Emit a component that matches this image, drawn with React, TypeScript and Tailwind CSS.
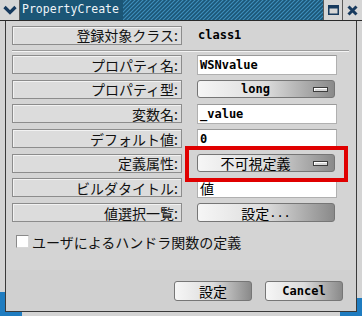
import React from "react";

const cjk = "font-['Noto_Sans_CJK_JP',sans-serif]";
const mono = "font-['DejaVu_Sans_Mono',monospace]";

function Label({ children }: { children: React.ReactNode }) {
  return (
    <div
      className={`w-[170px] h-[19px] shrink-0 border border-[#8c8c8c] bg-[#dcdcdc] shadow-[inset_1px_1px_0_#f2f2f2] flex items-center justify-end pr-[3px] text-[14px] leading-none text-[#111] ${cjk}`}
    >
      {children}
    </div>
  );
}

function Input({ children, isCjk }: { children: React.ReactNode; isCjk?: boolean }) {
  return (
    <div
      className={`ml-[15px] w-[140px] h-[20px] bg-white border border-[#b0b0b0] border-t-[#9a9a9a] flex items-center pl-[2px] leading-none text-black ${
        isCjk ? `${cjk} text-[14px]` : `${mono} font-bold text-[12px]`
      }`}
    >
      {children}
    </div>
  );
}

function Combo({ children, isCjk }: { children: React.ReactNode; isCjk?: boolean }) {
  return (
    <div className="ml-[15px] w-[138px] h-[18px] rounded-[3px] border border-[#767676] bg-gradient-to-r from-[#f6f6f6] via-[#dcdcdc] to-[#8a8a8a] flex items-center">
      <div
        className={`flex-1 text-center leading-none text-black ${
          isCjk ? `${cjk} text-[14px]` : `${mono} font-bold text-[12px]`
        }`}
      >
        {children}
      </div>
      <div className="w-[15px] h-[5px] mr-[6px] border border-[#3c3c3c] bg-[#d8d8d8] shadow-[inset_1px_1px_0_#ffffff]" />
    </div>
  );
}

function Row({ children }: { children: React.ReactNode }) {
  return <div className="flex items-center h-[20px] pl-[6px]">{children}</div>;
}

function Stripes() {
  return (
    <svg className="block w-full h-full" preserveAspectRatio="none">
      <defs>
        <pattern id="tstripe" width="4" height="4" patternUnits="userSpaceOnUse">
          <rect width="4" height="4" fill="#1b5676" />
          <path d="M-1 1 L1 -1 M0 4 L4 0 M3 5 L5 3" stroke="#3d8fbd" strokeWidth="1.1" />
        </pattern>
      </defs>
      <rect width="100%" height="100%" fill="url(#tstripe)" />
    </svg>
  );
}

export default function App() {
  return (
    <div className="relative w-[362px] h-[316px] bg-[#d4d4d4] flex flex-col overflow-hidden">
      {/* Title bar */}
      <div className="h-[21px] flex border-b border-[#2a2a2a] shrink-0">
        <div className="w-[20px] h-[20px] bg-[#d6d6d6] border-r border-[#5a5a5a] flex items-center justify-center">
          <svg width="14" height="10" viewBox="0 0 14 10">
            <path d="M1.5 2 L7 7.5 L12.5 2" fill="none" stroke="#173a5e" strokeWidth="3.2" />
          </svg>
        </div>
        <div className="bg-[#1b5676] flex items-center pl-[2px] pr-[4px]">
          <span className={`${mono} text-[11.5px] leading-none text-[#eef4f8]`}>PropertyCreate</span>
        </div>
        <div className="flex-1 h-[20px] bg-[#1b5676]">
          <Stripes />
        </div>
        <div className="w-[19px] bg-[#d6d6d6] border-l border-[#5a5a5a] flex items-center justify-center">
          <svg width="11" height="10" viewBox="0 0 11 10">
            <rect x="0.75" y="0.75" width="9.5" height="8.5" fill="none" stroke="#173a5e" strokeWidth="1.5" />
            <rect x="0" y="0" width="11" height="3.5" fill="#173a5e" />
          </svg>
        </div>
        <div className="w-[20px] bg-[#d6d6d6] border-l border-[#5a5a5a] flex items-center justify-center">
          <svg width="11" height="11" viewBox="0 0 11 11">
            <path d="M1.5 1.5 L9.5 9.5 M9.5 1.5 L1.5 9.5" stroke="#173a5e" strokeWidth="3" />
          </svg>
        </div>
      </div>

      {/* Body frame */}
      <div className="flex-1 flex flex-col px-[5px] pb-[4px]">
        <div className="flex-1 flex flex-col border-l border-r border-b border-[#3a3a3a] bg-[#d4d4d4]">
          <div className="pt-[4px]">
            <Row>
              <Label>登録対象クラス:</Label>
              <span className={`ml-[16px] ${mono} font-bold text-[12px] leading-none text-black`}>class1</span>
            </Row>
          </div>
          <div className="mt-[5px] ml-[6px] mr-[7px] h-[2px] border-t border-[#9c9c9c] border-b border-b-[#f4f4f4]" />
          <div className="mt-[2.5px] flex flex-col gap-[4.7px]">
            <Row>
              <Label>プロパティ名:</Label>
              <Input>WSNvalue</Input>
            </Row>
            <Row>
              <Label>プロパティ型:</Label>
              <Combo>long</Combo>
            </Row>
            <Row>
              <Label>変数名:</Label>
              <Input>_value</Input>
            </Row>
            <Row>
              <Label>デフォルト値:</Label>
              <Input>0</Input>
            </Row>
            <Row>
              <Label>定義属性:</Label>
              <Combo isCjk>不可視定義</Combo>
            </Row>
            <Row>
              <Label>ビルダタイトル:</Label>
              <Input isCjk>値</Input>
            </Row>
            <Row>
              <Label>値選択一覧:</Label>
              <div className="ml-[15px] w-[138px] h-[19px] rounded-[3px] border border-[#767676] bg-gradient-to-r from-[#f6f6f6] via-[#dcdcdc] to-[#8a8a8a] flex items-center justify-center leading-none text-black">
                <span className={`${cjk} text-[14px]`}>設定</span>
                <span className={`${mono} text-[12px]`}>...</span>
              </div>
            </Row>
          </div>
          <div className="mt-[9px] h-[20px] flex items-center pl-[10px]">
            <div className="w-[13px] h-[13px] bg-white border border-[#8a8a8a] border-r-[#d8d8d8] border-b-[#d8d8d8]" />
            <span className={`ml-[3px] ${cjk} text-[14px] leading-none text-[#111]`}>
              ユーザによるハンドラ関数の定義
            </span>
          </div>
          <div className="flex-1" />
          <div className="h-[41px] bg-[#d0d0d0] flex items-center justify-end gap-[13px] pr-[13px]">
            <div
              className={`w-[78px] h-[20px] rounded-[3px] border border-[#767676] bg-gradient-to-r from-[#f6f6f6] via-[#dcdcdc] to-[#8a8a8a] flex items-center justify-center ${cjk} text-[14px] leading-none text-black`}
            >
              設定
            </div>
            <div
              className={`w-[78px] h-[20px] rounded-[3px] border border-[#767676] bg-gradient-to-r from-[#f6f6f6] via-[#dcdcdc] to-[#8a8a8a] flex items-center justify-center ${mono} font-bold text-[12px] leading-none text-black`}
            >
              Cancel
            </div>
          </div>
        </div>
      </div>

      {/* Frame corner accents */}
      <div className="absolute left-0 bottom-0 w-[5px] h-[24px] bg-[#1f7cc0]" />
      <div className="absolute left-0 bottom-0 w-[22px] h-[4px] bg-[#1f7cc0]" />
      <div className="absolute right-0 bottom-0 w-[5px] h-[18px] bg-[#1f7cc0]" />
      <div className="absolute right-0 bottom-0 w-[22px] h-[4px] bg-[#1f7cc0]" />

      {/* Red highlight */}
      <div className="absolute left-[185px] top-[146px] w-[163px] h-[36px] border-[4px] border-[#e00000]" />
    </div>
  );
}
